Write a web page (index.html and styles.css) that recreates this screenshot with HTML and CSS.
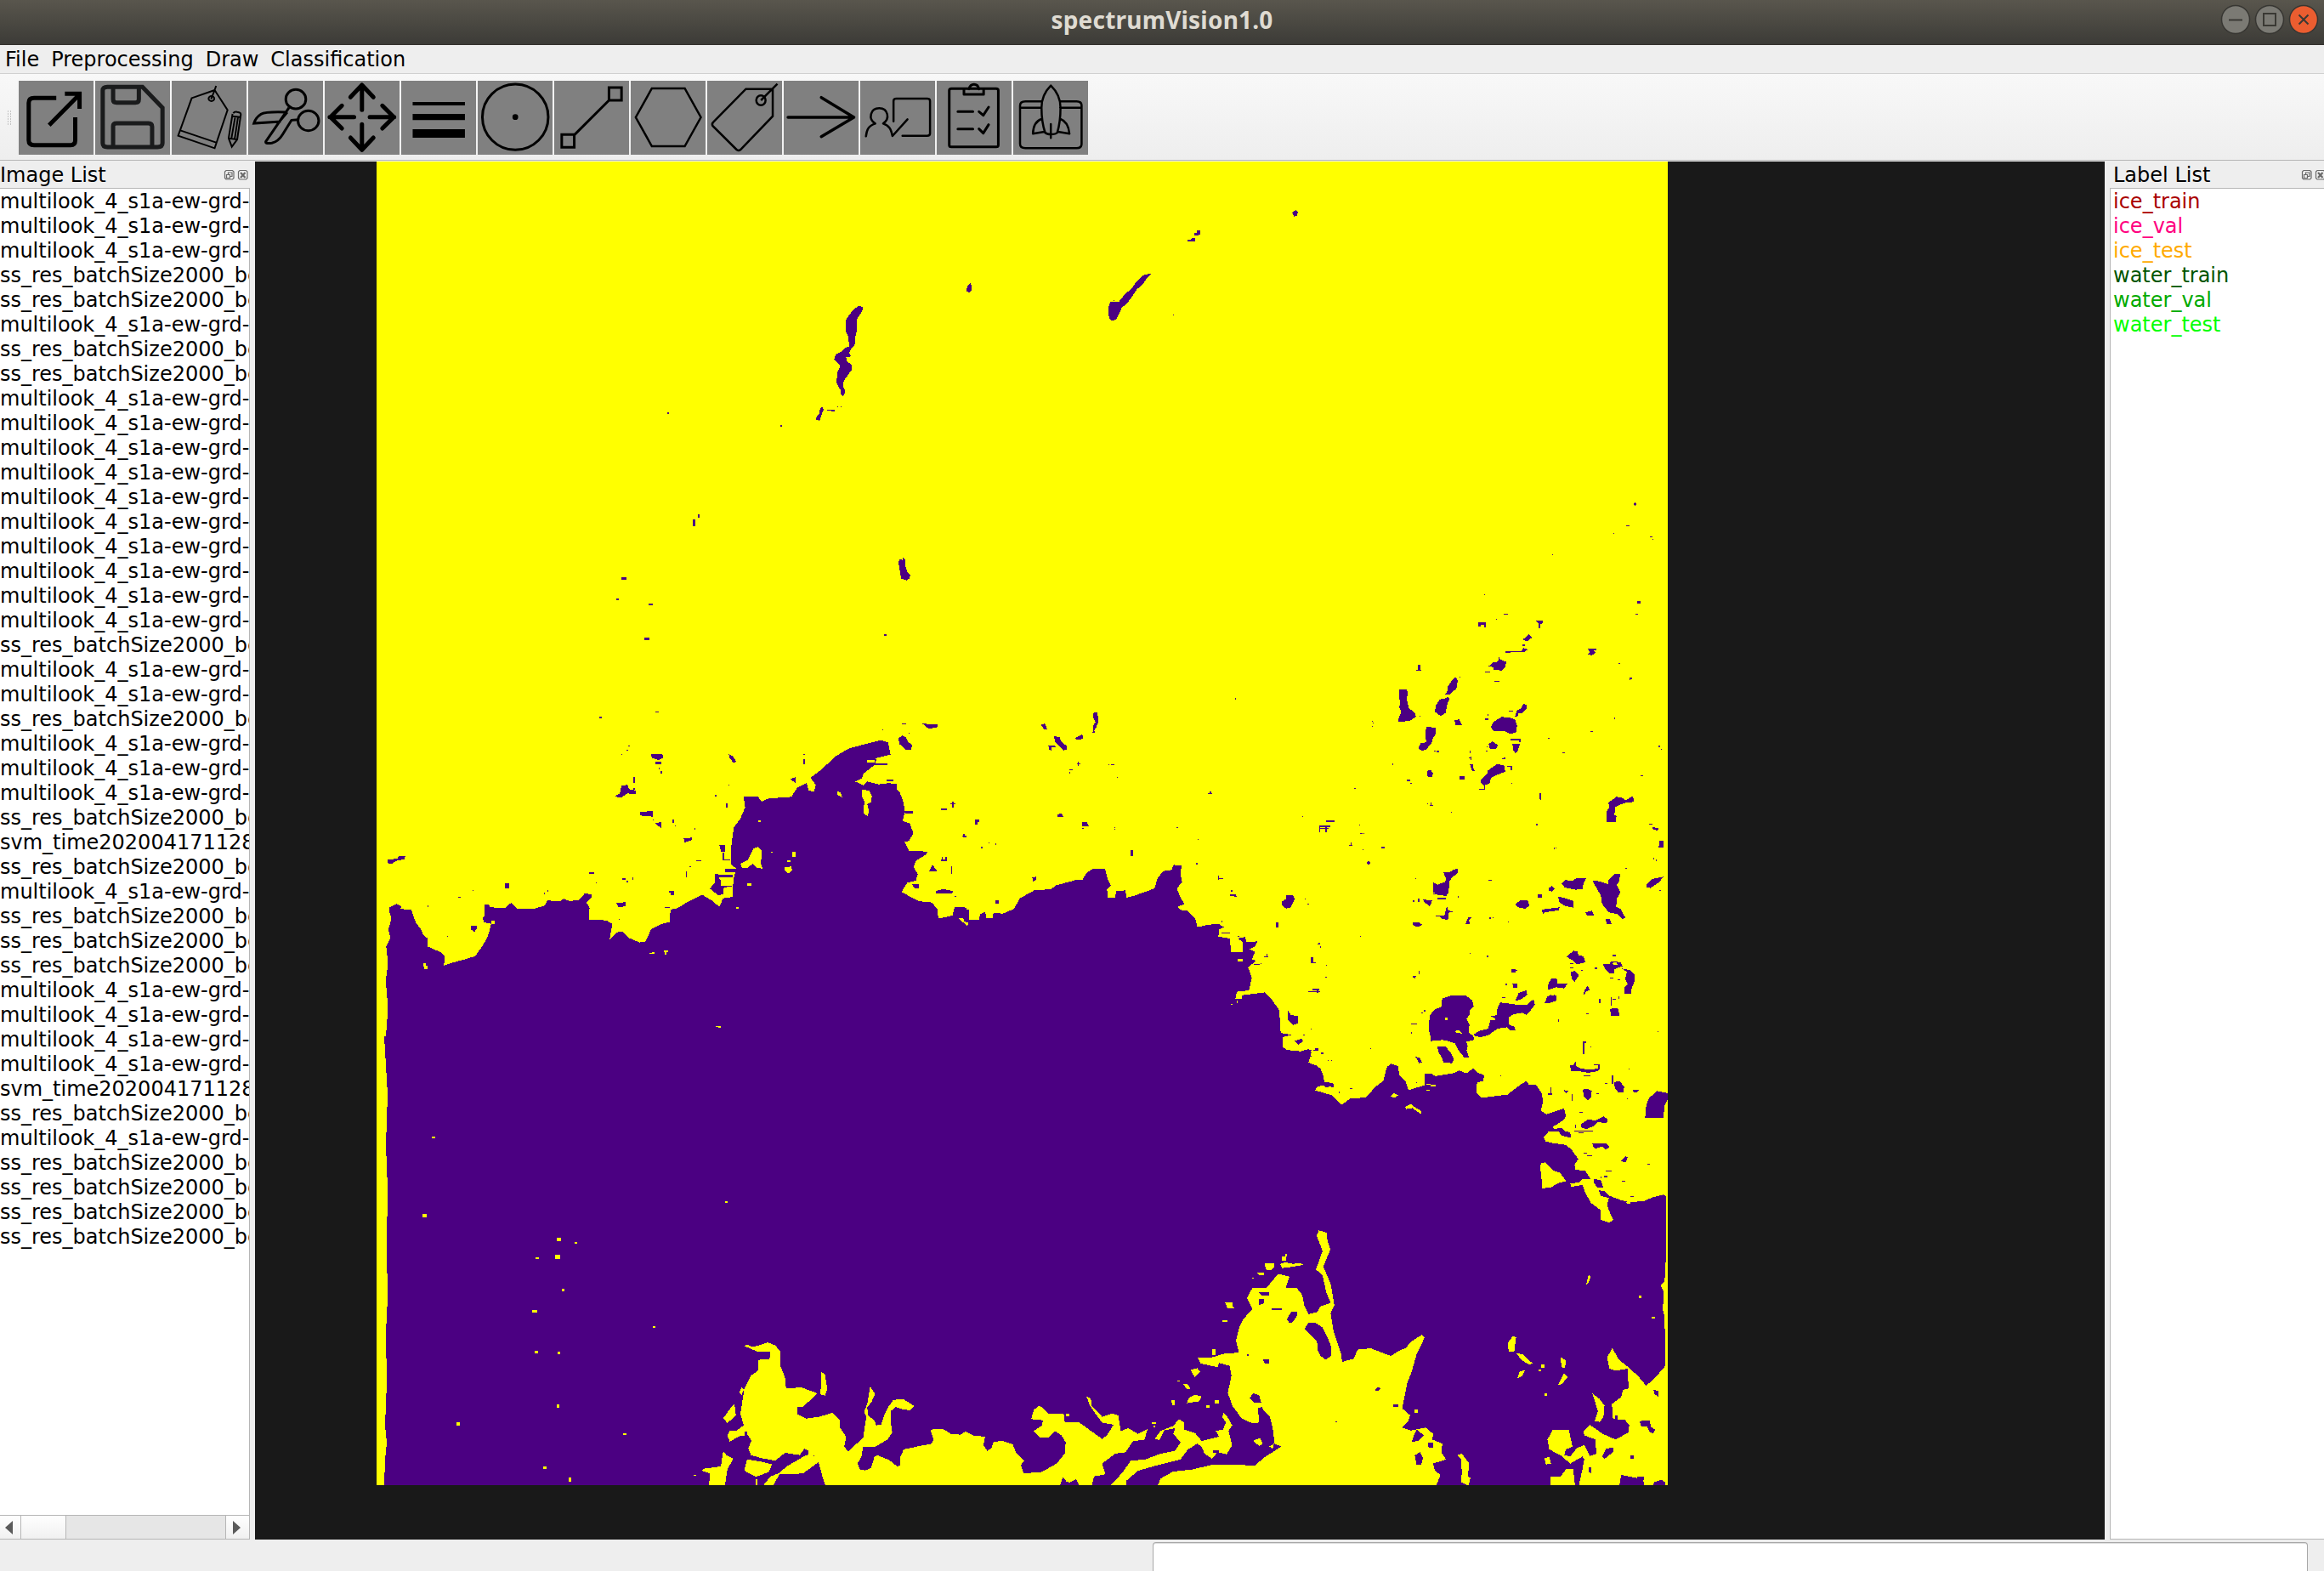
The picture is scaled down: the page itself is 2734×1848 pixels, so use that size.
FILE: index.html
```html
<!DOCTYPE html>
<html lang="en">
<head>
<meta charset="utf-8">
<title>spectrumVision1.0</title>
<link rel="stylesheet" href="styles.css">
</head>
<body>
<header class="titlebar">
  <h1 class="title">spectrumVision1.0</h1>
  <div class="winbtns">
    <svg class="winbtn" viewBox="0 0 36 36"><circle class="ring" cx="18" cy="18" r="16.5"/><path d="M10 18.5h16"/></svg>
    <svg class="winbtn" viewBox="0 0 36 36"><circle class="ring" cx="18" cy="18" r="16.5"/><path d="M11 11h14v14h-14z"/></svg>
    <svg class="winbtn close" viewBox="0 0 36 36"><circle class="ring" cx="18" cy="18" r="16.5"/><path d="M12.5 12.5l11 11M23.500 12.5l-11 11"/></svg>
  </div>
</header>
<nav class="menubar"><span>File</span><span>Preprocessing</span><span>Draw</span><span>Classification</span></nav>
<div class="toolbar">
  <i class="grip"></i>
  <svg class="tool w5" viewBox="52 285 209 261" preserveAspectRatio="none"><path d="M157 346H95Q80 346 80 363V495Q80 512 95 512H197Q210 512 210 495V414M181 331H222V384M137 442L222 333"/></svg>
  <svg class="tool w5 soft" viewBox="266 285 209 261" preserveAspectRatio="none"><path d="M300 307H398L454 380V505Q454 519 440 519H300Q287 519 287 505V320Q287 307 300 307M316 307V350Q316 362 326 362H378Q388 362 388 350V307M316 519V445Q316 435 326 435H415Q425 435 425 447V519"/></svg>
  <svg class="tool w2" viewBox="480 285 209 261" preserveAspectRatio="none"><path d="M536 346L600 318L636 388L600 523L498 479ZM504 460L604 503M604 303L600 318L590 350M652 400Q655 393 663 395Q674 397 673 405L663 492L648 518L639 488L650 402M650 410L672 413M640 488L662 492M657 415L647 488M665 415L656 490"/><ellipse cx="591" cy="348" rx="8" ry="9"/></svg>
  <svg class="tool w3" viewBox="694 285 209 261" preserveAspectRatio="none"><ellipse cx="827" cy="350" rx="28" ry="34"/><ellipse cx="862" cy="426" rx="29" ry="35"/><path d="M808 380L743 500Q742 508 760 505Q778 500 790 475L815 424L836 422M803 396Q742 393 730 403Q715 415 710 435L785 429M803 396L782 428"/></svg>
  <svg class="tool w5 round" viewBox="908 285 209 261" preserveAspectRatio="none"><path d="M1012 388V302M980 343L1012 300L1044 343M1012 439V525M980 486L1012 529L1044 486M990 413H922M956 373L924 413L956 453M1034 413H1102M1069 373L1101 413L1069 453"/></svg>
  <svg class="tool" viewBox="1121 285 209 261" preserveAspectRatio="none"><path class="solid" d="M1153 360h146v12h-146zM1153 402h146v22h-146zM1153 456h146v30h-146z"/></svg>
  <svg class="tool w3" viewBox="1335 285 209 261" preserveAspectRatio="none"><ellipse cx="1440" cy="413" rx="92" ry="116"/><ellipse class="solid" cx="1440" cy="413" rx="8" ry="10"/></svg>
  <svg class="tool w3" viewBox="29 45 209 261" preserveAspectRatio="none"><path d="M182 69h35v45h-35zM50 235h35v45h-35zM182 114L86 235"/></svg>
  <svg class="tool w2b" viewBox="242 45 209 261" preserveAspectRatio="none"><path d="M301 72H393L438 174L393 276H301L256 174Z"/></svg>
  <svg class="tool w2b" viewBox="456 45 209 261" preserveAspectRatio="none"><path d="M564 74H639V170L549 288Q544 294 538 288L471 204Q468 197 473 191ZM606 114L652 56"/><ellipse cx="606" cy="114" rx="13" ry="17"/></svg>
  <svg class="tool w35 round" viewBox="670 45 209 261" preserveAspectRatio="none"><path d="M682 174H866M775 104L866 174L775 242"/></svg>
  <svg class="tool w2b round" viewBox="884 45 209 261" preserveAspectRatio="none"><path d="M926 196C905 180 912 142 937 142C962 142 968 180 948 196C965 203 970 215 974 240L1016 181M926 196C905 205 902 220 900 241M977 188V116Q977 108 985 108H1071Q1079 108 1079 116V231Q1079 239 1071 239H1002"/></svg>
  <svg class="tool w3 round" viewBox="1098 45 209 261" preserveAspectRatio="none"><rect x="1133" y="73" width="137" height="205" rx="6"/><path d="M1174 75V93H1229V75M1188 74Q1192 58 1202 58Q1213 58 1216 74M1157 154H1199M1216 154L1228 167L1243 138M1157 215H1199M1216 215L1228 230L1243 200"/></svg>
  <svg class="tool w2b round" viewBox="1311 45 209 261" preserveAspectRatio="none"><path d="M1389 118H1345Q1330 118 1330 133V268Q1330 283 1345 283H1488Q1502 283 1502 268V133Q1502 118 1488 118H1443M1330 140H1390M1442 140H1502M1416 62Q1390 95 1390 140Q1390 190 1400 228Q1405 234 1416 234Q1430 234 1434 228Q1443 190 1443 140Q1443 95 1416 62ZM1390 180Q1367 190 1366 232L1398 225M1443 180Q1465 190 1468 232L1436 225M1416 198V247"/></svg>
</div>
<main class="workspace">
  <section class="dock images">
    <div class="dockhead"><span>Image List</span><svg class="dockbtns" viewBox="0 0 27 12"><path d="M2 .5h7.500l1.500 1.500v7.500l-1.500 1.500h-7.500l-1.500-1.500v-7.500zM18 .5h7.500l1.500 1.500v7.500l-1.500 1.500h-7.500l-1.500-1.500v-7.500zM2.500 5.500h4v4h-4zM4.500 5.500v-2.500h4.500v4.500h-2.500"/><path class="x" d="M19 3l5.500 6M24.500 3l-5.500 6"/></svg></div>
    <ul class="list">
      <li>multilook_4_s1a-ew-grd-</li><li>multilook_4_s1a-ew-grd-</li><li>multilook_4_s1a-ew-grd-</li><li>ss_res_batchSize2000_be</li><li>ss_res_batchSize2000_be</li><li>multilook_4_s1a-ew-grd-</li><li>ss_res_batchSize2000_be</li><li>ss_res_batchSize2000_be</li><li>multilook_4_s1a-ew-grd-</li><li>multilook_4_s1a-ew-grd-</li><li>multilook_4_s1a-ew-grd-</li><li>multilook_4_s1a-ew-grd-</li><li>multilook_4_s1a-ew-grd-</li><li>multilook_4_s1a-ew-grd-</li><li>multilook_4_s1a-ew-grd-</li><li>multilook_4_s1a-ew-grd-</li><li>multilook_4_s1a-ew-grd-</li><li>multilook_4_s1a-ew-grd-</li><li>ss_res_batchSize2000_be</li><li>multilook_4_s1a-ew-grd-</li><li>multilook_4_s1a-ew-grd-</li><li>ss_res_batchSize2000_be</li><li>multilook_4_s1a-ew-grd-</li><li>multilook_4_s1a-ew-grd-</li><li>multilook_4_s1a-ew-grd-</li><li>ss_res_batchSize2000_be</li><li>svm_time202004171128</li><li>ss_res_batchSize2000_be</li><li>multilook_4_s1a-ew-grd-</li><li>ss_res_batchSize2000_be</li><li>ss_res_batchSize2000_be</li><li>ss_res_batchSize2000_be</li><li>multilook_4_s1a-ew-grd-</li><li>multilook_4_s1a-ew-grd-</li><li>multilook_4_s1a-ew-grd-</li><li>multilook_4_s1a-ew-grd-</li><li>svm_time202004171128</li><li>ss_res_batchSize2000_be</li><li>multilook_4_s1a-ew-grd-</li><li>ss_res_batchSize2000_be</li><li>ss_res_batchSize2000_be</li><li>ss_res_batchSize2000_be</li><li>ss_res_batchSize2000_be</li>
    </ul>
    <div class="scroll">
      <div class="arrow"><svg viewBox="0 0 9 16"><path d="M9 0v16l-9-8z"/></svg></div>
      <div class="handle"></div><div class="track"></div>
      <div class="arrow right"><svg viewBox="0 0 9 16"><path d="M0 0v16l9-8z"/></svg></div>
    </div>
  </section>
  <section class="canvas">
    <svg class="map" viewBox="443 190 1519 1557" shape-rendering="crispEdges">
      <!-- solid interior of the ice field -->
      <path class="p" d="M452 1219H1100V1299H1600V1499H1959V1747H452l1-30 2-20-2-20 2-50-1-60 2-40-1-60 1-70-2-50 2-60z"/>
      <!-- west coast -->
      <g transform="translate(440 820) scale(.446429 .333333)">
        <path class="p" d="M31 1203L37 1100 31 1000 37 940 32 880 43 850 38 820 46 780 40 755 40 742 60 730 72 738 70 748 98 750 110 795 124 820 130 840 140 850 141 880 175 900 187 915 184 947 205 938 240 925 266 915 285 880 300 845 309 800 290 795 286 780 292 770 292 732 303 732 306 742 345 744 362 725 378 748 418 748 450 736 457 718 490 720 500 712 515 720 540 716 556 692 575 698 572 710 560 725 568 745 566 785 612 788 628 800 621 855 640 830 655 827 672 850 700 866 716 862 730 820 755 802 780 793 781 750 800 745 830 720 865 698 890 718 910 740 920 710 946 705 945 680 948 640 955 605 940 590 942 520 948 460 965 430 978 390 974 350 1010 350 1022 368 1040 358 1100 352 1115 320 1140 303 1145 330 1160 334 1164 310 1150 285 1180 255 1215 210 1250 182 1305 162 1335 152 1355 160 1361 203 1325 215 1320 238 1290 270 1285 288 1268 298 1290 312 1300 298 1330 308 1360 303 1385 335 1395 370 1399 405 1393 438 1412 445 1421 480 1410 508 1398 510 1410 543 1458 545 1455 555 1428 578 1422 600 1433 625 1428 648 1405 655 1390 688 1435 720 1470 725 1485 750 1487 782 1525 775 1530 742 1550 742 1568 752 1568 1203Z
        M1382 145L1392 136 1402 142 1408 160 1418 168 1416 185 1402 186 1384 165ZM1445 94L1485 96 1485 106 1462 112ZM730 202L760 202 762 215 750 222 732 214ZM742 228h14v10h-14zM935 202L945 208 955 228 948 233 937 215ZM635 350L648 340 652 312 668 310 672 325 690 330 690 343 668 340 650 356ZM702 405L735 402 735 422 702 418ZM742 445L758 440 758 466ZM816 498L838 496 838 504 818 514ZM910 522L926 522 924 545 914 545ZM36 574L62 570 66 560 82 562 80 572 58 578 48 588 36 586ZM256 808L270 806 270 818 264 830 256 820ZM346 658h10v16h-10zM638 726L662 724 662 738 645 742ZM885 676L898 655 898 625 946 628 946 635 908 636 920 660 945 668 922 672 920 695 908 700ZM1462 615L1472 592 1484 614ZM1480 684L1500 678 1525 684 1524 693 1482 694ZM1418 660h18v14h-12zM1096 290L1112 282 1110 302ZM777 684h14v14h-10v-8h-4zM1320 235h32v6h-32zM1350 292h18v6h-18zM1362 305h15v22h-10zM1396 402h24v8h-20zM926 607h30v10h-30z"/>
        <path class="sp" d="M742 52h8M598 70h2M1390 95h12M686 282v20M686 320v8M757 262v8M752 250v5M1133 202v3M1133 218v18M935 308v5M900 346v4M930 376v14M789 432v12M794 453v3M736 432v3M845 465h2M868 490h2M850 578h12M833 596v4M823 615v20M567 621h14M585 655h2M655 642h8M668 648v5M682 636v10M449 693h2M458 680v6M222 706h6M260 682h2M142 736v5M193 844h2M921 548v28M921 574h18M1518 376h14M1525 368v22M1495 396h15M1550 491h10M1555 482v12M1497 565v12h10v-12M1522 598v26M1530 703h4M765 742h14M653 184h2M665 188h4M672 172v3M653 201v3M1340 115h2M1408 127h4M644 784h3"/>
        <path class="y" d="M965 588L985 575 1000 535 1012 528 1021 540 1020 590 1024 606 1008 602 998 588 985 602 970 602ZM1082 600L1100 598 1102 612 1092 622 1082 612ZM1088 575h10v8h-10zM1102 545h8v18h-8zM1220 330L1230 338 1234 355 1222 345ZM1286 326L1305 330 1312 350 1310 370 1300 378 1305 405 1300 420 1290 410 1290 385 1294 375 1286 350ZM1322 215h22v4h-22zM1300 222h20v10h-20zM984 658h10v8h-10zM1012 436h8v5h-8zM130 940h6v8h5v12h-9zM726 903L740 900 740 905 728 907ZM764 895h10v5h-3v10h-4zM954 740h6v6h-6zM1046 545h5v4h-5zM900 1161h7v3h-7zM576 766h4v10h-4zM310 790h8v12h-8zM915 636h26v30h-26zM1540 782h26v24h-10z"/>
      </g>
      <!-- north coast -->
      <g transform="translate(1100 800) scale(.333333)">
        <path class="p" d="M0 810L10 810 10 842 45 835 63 830 66 808 85 800 110 803 120 825 118 845 155 845 160 825 178 818 180 840 203 840 206 822 240 824 278 808 300 770 350 742 410 738 425 725 495 706 520 705 535 680 555 667 600 665 610 705 621 725 607 740 610 768 635 768 640 745 672 742 676 768 700 762 740 748 775 735 785 700 805 674 835 670 842 652 870 655 866 685 872 714 853 735 865 765 880 790 856 800 865 811 890 814 920 845 926 872 960 864 1000 860 1020 872 1003 880 1000 905 1040 912 1045 960 1085 960 1087 925 1068 912 1095 906 1098 925 1138 922 1130 940 1110 950 1130 960 1118 985 1132 990 1105 1015 1118 1050 1108 1095 1065 1100 1060 1125 1082 1125 1085 1112 1165 1102 1190 1130 1215 1165 1220 1245 1258 1252 1228 1260 1228 1295 1240 1305 1290 1310 1320 1302 1328 1315 1318 1350 1350 1362 1370 1400 1373 1418 1408 1425 1405 1438 1385 1430 1345 1434 1342 1448 1400 1465 1420 1485 1430 1500 1445 1500 1470 1478 1500 1478 1500 1503 0 1503Z
        M374 156L388 154 396 174 384 174ZM420 198L440 202 446 218 464 232 464 246 452 248 424 218ZM400 232L420 230 428 236 412 238 410 248 402 244ZM496 204L520 192 522 208 498 210ZM560 114L573 114 577 146 570 164 562 178 566 186 556 186 560 156 566 148 558 132ZM430 473L446 472 456 484 434 484ZM519 502L536 502 540 512 544 516 519 516ZM343 696L356 694 358 704 346 710ZM1224 782L1240 772 1238 758 1262 758 1270 772 1256 802 1240 806 1226 798ZM1245 1165L1256 1182 1280 1186 1280 1212 1264 1217 1246 1198ZM1268 1274L1296 1264 1298 1276 1282 1287ZM212 778h12v12h-12zM1204 854h8v18h-8zM690 600h8v20h-8zM142 493h13v8h-6v10h-7zM1327 978h8v22h-8z"/>
        <path class="sp" d="M1058 66h3M500 296h12M506 288v14M474 316h12M476 324v6M622 298h10M612 298h2M642 343h3M964 400h14M972 392v10M1480 383h5M1380 498h30M1356 516h40M1356 524h32M1380 518v18M1358 518v18M1462 584h12M1468 572v14M55 436h18M64 428v20M22 456h20M98 552h12M104 542v14M163 591h6M190 574h2M214 575v8M20 636h20M26 626v10M38 626v10M58 658v24M70 763h2M520 523h5M634 519v3M634 525v3M852 520h5M928 562v3M1297 481h2M922 648h4M1000 690v14M1000 700h16M1043 744h8M1042 759h20M1056 764h8M1306 772h2M1315 790h5M1012 850v5M1012 893h30M1068 904h5M1160 976h16M1172 966v10M1125 1003h20M1352 930h6M1360 942h2M1330 998h14M1380 1006h3M1378 1048h5M1318 1100h42M1332 1092h24M1350 1090v14M1327 1230v3M1300 1252h6M1340 1302h14M1364 1316h6M1386 1342h3M1398 1342h3M1424 1455h4M1466 1441h6M1150 1000h2"/>
        <path class="y" d="M82 840L100 840 104 852 118 856 114 870 98 854ZM1050 932h30v25h-30zM1068 984h18v10h-18zM1045 1142h4v3h-4zM1066 1130h3v10h-3z"/>
      </g>
      <!-- north-east islands -->
      <g transform="translate(1540 560) scale(.333333)">
        <path class="p" d="M597 517h28v18h-6v-10h-14v6h-8zM798 510h26v10l-8 4v14h-5v-16zM752 576L764 570 776 558 788 570 768 584ZM694 618h56l6-12 16 6-10 8h-50v5h-18zM632 672L650 658 664 656 672 645 696 656 692 676 680 686 652 684 650 674ZM984 610h30v6h-8l6 8-14 8-16-2 10-8zM378 684h6v-18h8v12l4 10h-16zM318 754L346 752 348 774 344 785 352 818 375 838 377 850 355 864 314 868 318 850 326 834 316 812 322 808 318 775ZM516 708L525 722 520 750 495 772 480 772 490 755 490 742 505 720ZM490 778L496 786 486 810 483 835 465 847 444 832 448 808 462 788 478 786ZM514 862L530 858 540 880 516 880ZM414 885L447 888 447 910 436 928 432 945 422 954 414 965 398 970 386 960 394 942 414 940 410 912ZM734 828L750 818 756 804 768 808 768 820 752 836 738 838 736 850 726 850ZM642 884L650 868 680 850 706 852 726 858 734 880 732 904 710 910 690 900 660 900 648 898ZM634 946L646 936 668 950 660 962 638 962ZM710 928h36v12h-6v-8h-28zM718 946L744 946 736 972 728 978 720 966ZM606 1074L628 1052 630 1040 664 1016 690 1022 692 1044 658 1056 642 1066 638 1084 618 1092 608 1084ZM568 1018h12v14l6 10h-10zM416 1040L430 1038 438 1050 434 1062 416 1060ZM532 1058h18v14h-18zM1050 1222L1050 1185 1060 1168 1056 1152 1085 1132 1105 1136 1118 1144 1140 1130 1148 1140 1144 1150 1112 1154 1080 1168 1078 1196 1085 1200 1082 1222ZM1212 1238L1235 1244 1230 1252 1214 1246ZM1236 1288h16v22h-18zM1158 441h12v9h-12zM812 1120h8v20h-8z"/>
        <path class="sp" d="M1146 99h8M1150 94v10M1120 175h10M1075 202h3M1203 214h8M1213 223h3M858 277h3M618 418h3M687 488h14M660 505h3M1152 487h8M754 597h8M670 640v8M620 692h18M655 724h18M1092 661h5M1132 714h8M1133 714v5M532 709h3M223 865v3M226 871v3M223 882v3M391 847h3M706 829h14M620 858h14M631 841v5M1078 853v5M994 902h8M844 925h5M895 976h8M1234 954h6M1243 962v4M626 955h3M625 970h4M442 970h6M450 972h8M568 970v8M564 995h8M571 990v12M680 998h12M690 992v8M700 1024h16M714 1026v12M294 1017h3M346 1074h12M358 1084h4M160 1102h5M620 1092v12M600 1105h20M715 1084h3M1170 1057h8M818 1125v18M418 1157h3M425 1163h12M431 1152v12M502 1186h3M802 1230h6M1200 1228h12M256 1311h12M178 1232h3M180 1262h8M193 1262h3M190 1318h3M865 1314h3M870 1312h3M1216 1350v3M1225 1356h3"/>
      </g>
      <!-- east coast -->
      <g transform="translate(1540 1000) scale(.333333)">
        <path class="p" d="M0 755L15 755 40 770 52 800 53 818 85 822 85 832 60 838 50 830 30 833 22 848 70 862 100 885 115 899 145 877 200 873 235 835 262 815 275 765 290 754 315 762 318 795 340 815 351 847 380 838 408 830 408 790 430 788 445 798 510 787 530 778 555 788 580 770 595 785 618 795 615 815 593 820 590 855 610 874 700 863 750 825 768 815 775 828 800 828 820 855 826 885 818 920 838 932 900 912 907 940 895 955 858 978 865 985 890 980 905 992 922 996 924 1015 892 1008 880 992 845 994 828 1012 835 1028 860 1034 905 1040 925 1055 950 1090 937 1110 940 1128 975 1132 990 1155 994 1162 965 1160 955 1172 922 1177 925 1188 965 1182 975 1210 995 1245 1028 1270 1030 1305 1060 1315 1074 1305 1060 1275 1052 1255 1058 1228 1030 1220 1022 1200 1045 1205 1060 1220 1100 1235 1130 1243 1185 1238 1210 1226 1250 1216 1262 1222 1260 1440 1257 1503 0 1503Z
        M474 78L496 78 512 68 526 66 526 80 506 95 496 110 492 150 484 162 455 158 438 148 438 114 454 122 480 112 484 102ZM452 168h30v6h-30zM400 174L435 178 426 198 412 188ZM486 198L492 212 508 218 494 220 490 248 464 240 462 232 478 230ZM366 256L385 254 400 264 384 272 366 264ZM562 236h12l-10 12 4 14h-16l6-16zM892 118L905 106 930 108 945 98 978 100 968 120 966 138 940 140 902 132ZM1000 108L1026 110 1055 120 1056 108 1080 84 1097 84 1096 108 1086 124 1099 148 1086 172 1084 200 1100 208 1116 238 1108 244 1088 226 1058 220 1034 190 1030 160 1018 140ZM1190 124L1212 102 1252 94 1232 116 1205 134 1192 132ZM845 135L856 127 868 136 856 146 846 143ZM808 156h14v12h-14zM726 192L745 178 772 178 778 196 762 207 738 202ZM878 164L900 168 934 180 934 203 905 198 884 184ZM820 210L850 206 884 202 882 212 832 220 826 226ZM976 220L998 214 1006 230 980 230ZM1046 244L1060 242 1068 260 1052 262ZM908 376L934 355 948 358 950 370 968 375 976 395 960 400 945 402 932 390ZM925 430L938 426 952 442 938 464 926 455ZM1036 402L1060 402 1068 392 1100 396 1106 410 1078 420 1076 434 1058 434 1046 420ZM1104 418L1135 424 1148 440 1148 465 1138 490 1138 506 1112 506 1114 484 1124 472 1116 455 1122 430ZM842 494L845 470 856 452 874 454 878 472 896 472 912 472 900 488 872 484ZM832 540L840 518 858 508 874 514 872 532 848 540ZM728 532L740 504 768 494 770 510 750 526ZM968 514L972 494 984 478 990 494 978 500ZM1062 560L1090 558 1096 584 1066 586ZM714 420h14v12h-14zM718 470h16v15h-14zM364 446L378 444 374 454ZM467 552L470 524 500 514 552 512 576 530 581 550 568 565 566 580 556 596 566 615 564 645 580 655 582 670 555 676 560 690 556 708 565 732 548 732 526 705 515 682 495 675 470 670 430 674 428 655 422 630 426 585 440 565ZM582 650L600 638 632 630 640 600 662 598 642 586 664 582 664 562 674 538 696 540 735 546 770 545 792 526 797 545 780 568 768 582 752 574 720 580 705 590 705 615 726 624 728 636 710 636 700 625 665 630 632 654 605 660 585 656ZM452 692L480 692 498 712 512 738 505 752 475 750 468 732 458 715ZM376 730L390 732 400 750 388 752ZM965 676h12v6h-6v38h-6zM920 758h14l6-12 4 18 20 8 35 2 22-4v-10h-15v-4h20v16l-6 8-34 6-36-6h-25zM1076 820L1096 814 1112 835 1110 855 1092 856 1080 840ZM966 845L980 842 998 850 994 875 984 882 970 870ZM898 846L914 850 908 860ZM1142 846h22l-8 10h-10zM1186 945L1190 900 1200 875 1228 850 1266 858 1266 880 1255 900 1250 946ZM958 968L985 950 1010 955 1040 940 1054 950 1050 964 1020 960 1002 975 980 984 962 980ZM1000 1036h50l10 12-14 10-12-12-24 8-8-8zM1100 1098L1116 1080 1124 1084 1118 1102ZM1005 1160L1030 1166 1038 1190 1018 1192 1004 1172Z"/>
        <path class="sp" d="M205 45h10M210 40v10M376 101h3M632 107h12M366 180h6M387 170v14M448 233h14M636 240h6M648 239h3M702 253h3M180 304h3M30 332h10M40 340v5M568 365h3M627 375h5M524 165h3M438 154h12M1116 65h5M1237 142h5M1216 28v4M1225 36h3M1070 372h12M1008 417h10M960 424h6M920 400h14M922 415h12M388 425v14M728 424h8M692 474h8M680 521h12M395 575h8M405 567h7M360 613h22M361 643v4M1062 452h12M1090 457h8M1026 525v16M1067 518v30M1072 526h12M1093 516v8M978 578h8M880 596v10M1230 640h3M994 694h3M1128 773h3M676 796h3M216 700h3M378 820h3M970 797h24M1044 823h10M1071 796v30M1014 860h8M1122 877h3M854 838v22M844 861h14M928 862v22M953 925h12M940 970v10M935 992h66M950 998h20M1195 1108h8M970 1070h12M982 1078h18M1048 1133h20M1040 1152h14M1028 1155h4M1105 1168h10M1133 1222h12M0 706h8M16 706h16M42 717h8M0 728h8M65 742h3M78 742h3M145 842h8M104 855h4"/>
        <path class="y" d="M818 1105L835 1102 860 1130 885 1138 908 1168 880 1175 850 1192 822 1193 820 1150 816 1125ZM288 870L300 858 315 866 300 874ZM340 906L360 896 370 905 395 920 396 932 380 922 365 910 342 914ZM414 824h14v4h-14zM430 828h18v5h-18zM414 846h12v4h-12zM1070 398L1085 396 1088 404 1074 404ZM480 590h9v9h-9zM515 638L530 636 540 648 520 644ZM1120 1243h14v6h-10zM856 494h8v20h-8z"/>
      </g>
      <!-- south-west leads -->
      <g transform="translate(780 1400) scale(.382653 .333333)">
        <path class="y" d="M142 1043L143 1000 120 990 125 983 178 975 185 920 195 935 216 948 198 985 190 1043ZM308 1043L330 1010 355 1000 380 975 440 935 468 938 478 960 430 1000 358 1003 338 1043Z
        M245 548L262 547 275 553 300 546 322 537 345 548 361 570 361 620 376 665 378 700 425 696 475 717 430 765 412 765 412 790 440 806 480 800 520 786 543 810 545 840 563 870 557 905 570 923 590 900 615 875 625 800 618 780 628 755 637 693 652 720 640 750 628 765 630 795 650 812 655 830 670 828 680 795 690 770 708 740 740 738 772 762 760 776 740 775 715 765 700 780 702 840 705 855 690 880 650 907 615 907 610 940 598 965 605 985 622 989 640 980 650 940 660 936 695 952 720 975 730 970 728 945 740 915 780 905 825 895 832 882 822 845 860 842 885 860 915 863 930 852 955 866 990 870 985 900 997 920 1010 910 1015 890 1040 884 1075 897 1085 925 1110 955 1100 970 1108 998 1160 997 1210 965 1235 930 1238 890 1225 865 1205 850 1185 872 1160 874 1140 850 1165 830 1168 812 1132 808 1140 775 1158 760 1185 788 1232 790 1235 818 1280 820 1350 878 1365 865 1385 828 1350 820 1330 790 1310 755 1302 728 1315 735 1318 760 1350 800 1380 788 1400 795 1407 850 1430 840 1460 860 1490 842 1480 882 1445 885 1422 925 1390 930 1350 965 1360 1003 1325 1010 1318 1043 1280 1043 1270 1020 1250 1032 1240 1028 1230 1012 1220 1043 499 1043 490 1010 478 960 468 938 445 935 448 920 435 912 420 935 375 927 345 955 300 945 270 935 262 910 272 885 262 865 235 868 205 888 198 865 205 848 225 850 248 830 238 790 250 700 270 655 292 637 292 600 328 590 328 570 290 570 270 560Z
        M485 640L498 650 505 700 498 725 482 720 487 690ZM185 805L210 765 220 755 224 795 198 822ZM258 950L310 960 335 968 325 995 285 1012 250 990ZM234 715L242 694 248 705 242 722ZM191 39h8v6h-8zM94 1004h8v4h-8zM1240 790h10v8h-10zM1503 820h14v4h-14zM1507 830h6v8h-6zM286 1020h4v20h-4z"/>
        <path class="p" d="M136 1000h8v25h-8zM252 852h8v16h-8zM242 918h12v16h-8zM256 930h10v18h-10zM308 590h18v8h-18z"/>
      </g>
      <!-- south-east leads -->
      <g transform="translate(1300 1400) scale(.433673 .333333)">
        <path class="y" d="M14 1043L45 1000 70 955 110 950 150 930 190 920 205 890 185 860 190 840 160 848 148 882 135 878 150 850 185 832 200 808 215 820 215 845 245 858 262 885 310 870 300 850 320 845 328 820 318 800 322 785 332 800 345 830 335 850 345 900 330 932 305 925 290 948 270 930 262 905 250 895 225 915 205 950 130 975 90 990 58 1025 58 1043Z
        M143 1043L150 1018 185 993 240 985 290 969 408 971 430 945 478 905 460 895 455 840 447 800 432 780 425 765 415 770 418 820 400 823 370 805 345 760 333 715 343 655 338 620 310 610 305 625 260 612 252 592 290 590 320 578 363 573 355 530 365 480 375 455 400 420 385 380 400 345 438 345 470 295 500 305 490 345 520 345 535 370 540 405 552 438 575 430 585 410 612 398 600 360 590 300 572 280 590 215 574 160 580 142 602 150 603 175 611 210 592 270 612 330 622 405 612 435 620 500 640 575 643 606 675 595 685 563 720 558 775 585 800 565 815 558 830 535 860 510 867 520 845 580 832 640 820 680 806 770 828 795 822 815 806 838 830 848 870 838 890 860 888 880 915 895 912 925 925 950 890 965 895 990 910 1005 898 1043Z
        M1528 615L1520 620 1490 665 1468 690 1445 655 1420 625 1395 600 1376 558 1362 590 1368 630 1385 637 1418 630 1420 700 1405 705 1400 730 1375 755 1378 808 1410 810 1422 830 1420 855 1385 880 1350 860 1315 828 1298 850 1300 865 1330 880 1333 930 1315 938 1300 900 1280 910 1262 940 1246 935 1250 915 1268 905 1258 845 1215 845 1200 880 1205 915 1235 935 1262 965 1295 940 1300 950 1295 985 1285 1043 1395 1043 1400 1005 1460 1020 1462 1043 1485 1043 1490 1030 1510 1022 1528 1040ZM1208 1043L1208 1010 1235 1012 1250 985 1270 985 1275 1043ZM1322 718L1340 735 1355 760 1352 800 1342 818 1328 815 1337 780ZM955 935L968 930 988 965 984 1010 992 1015 985 1043 965 1030 968 1000 966 950ZM1107 514L1115 520 1110 570 1095 570 1092 540ZM1115 575L1135 580 1150 602 1162 612 1150 615 1130 600ZM1118 665L1125 640 1140 635 1132 655ZM1236 590L1250 600 1248 628 1238 625ZM1228 688L1245 647 1256 660 1238 685ZM1192 945L1205 942 1210 965 1196 968ZM1192 718h8v9h-8zM1183 616h8v10h-8zM1176 634h6v5h-6zM840 775h8v10h-8zM1305 335L1312 298 1318 305 1312 325ZM1482 447h9v5h-9zM1449 373h5v8h-5zM402 885L420 874 428 895 418 903ZM445 905L458 895 455 912ZM432 258h28v12l-10 12h-12zM475 260L490 255 510 260 530 257 538 264 500 272 480 275ZM480 235h12v15h-12zM412 290h20v10h-14zM325 396h20v10l5 10h-18zM318 460h14v4h-14zM232 635L250 628 258 640 243 660ZM212 684h12l8 18h-10zM222 752L228 732 245 722 262 728 255 745ZM180 740h10v20h-8zM298 740h10v14h-10zM275 758h8v10h-8zM290 560h10v22h-10zM195 672h8v4h-8zM489 225h4v10h-4zM400 309h4v4h-4z
        M1523 17H1528V625H1520L1518 450 1513 420 1516 360 1507 335 1518 320 1521 250Z"/>
        <path class="p" d="M505 430L520 430 520 445 510 465 500 470 493 455ZM541 490L552 467 570 467 590 485 600 510 613 550 613 585 598 598 585 585 578 570 575 535 560 515ZM392 735L402 716 418 725 424 750 405 750ZM832 888L840 858 845 845 865 865 850 885ZM840 935L855 925 863 945 857 970 845 968ZM428 598h18v14h-12zM733 706L740 694 747 700 740 710ZM876 890h14v20h-12zM418 385L432 385 430 400 418 405ZM415 360h30v12h-20zM452 417h28v5h-28zM384 578h6v6h-6zM782 756h14v8h-14zM625 816h4v4h-4zM1348 940L1360 912 1380 908 1378 925 1355 948ZM1450 815L1478 812 1480 835 1492 845 1488 858 1478 855 1470 835 1455 835ZM1488 705L1502 708 1500 728 1490 720ZM1424 936h10v12h-10zM1312 978L1320 980 1320 1000 1312 995ZM1383 795h8v15h-8zM294 918h14v8h-14zM1425 20h8v4h-8zM1443 1012h20v10h-20z"/>
      </g>
      <!-- streaks in the open water -->
      <g transform="translate(860 220) scale(.446429 .333333)">
        <path class="p" d="M338 418L348 424 345 440 332 466 331 510 327 530 326 556 317 570 312 585 316 598 303 600 306 615 318 628 318 645 306 668 297 684 296 705 301 722 296 738 289 732 288 715 278 692 280 655 288 632 272 608 276 590 290 582 300 568 312 562 308 525 303 510 303 468 312 450 325 430ZM1106 307L1098 318 1084 345 1070 360 1054 392 1044 410 1030 425 1022 450 1015 468 1003 473 996 460 994 425 1000 405 1022 405 1040 375 1055 360 1068 335 1085 312 1098 307ZM622 350L632 338 635 362 628 374 621 368ZM1478 90L1488 82 1494 88 1492 100 1484 104ZM1228 154h8v14l-4 2h-11v-7h7zM1214 180h8v12h-19v-5h9zM240 774L244 785 238 805 234 824 224 822 226 808 234 800 234 785ZM254 785h20v8h-8l-2-4h-10zM441 1325L444 1314 452 1316 454 1306 458 1314 460 1340 466 1362 472 1370 470 1382 462 1388 448 1382 446 1362Z"/>
        <path class="sp" d="M132 840v5M280 775h3M289 775h3M1165 451h3M1008 400h3"/>
      </g>
      <path class="dot" d="M731 679h6v3h-6zM725 704h3v2h-3zM763 710h5v2h-5zM758 750h6v3h-6zM815 611h3v8h-3zM821 605h2v4h-2zM785 485h2v2h-2zM1040 746h3v2h-3zM705 843h3v2h-3z"/>
      <path class="y" d="M497 1428h5v4h-5zM508 1337h4v2h-4zM630 1479h4v2h-4zM655 1456h5v4h-5zM653 1476h6v5h-6zM676 1461h3v2h-3zM626 1541h6v3h-6zM661 1516h3v3h-3zM629 1589h4v3h-4zM656 1590h3v3h-3zM537 1673h4v4h-4zM655 1652h3v4h-3zM639 1725h4v3h-4zM669 1738h3v5h-3zM733 1686h4v2h-4zM768 1560h3v2h-3zM845 1207h3v2h-3z"/>
    </svg>
  </section>
  <section class="dock labels">
    <div class="dockhead"><span>Label List</span><svg class="dockbtns" viewBox="0 0 27 12"><path d="M2 .5h7.500l1.500 1.500v7.500l-1.500 1.500h-7.500l-1.500-1.500v-7.500zM18 .5h7.500l1.500 1.500v7.500l-1.500 1.500h-7.500l-1.500-1.500v-7.500zM2.500 5.500h4v4h-4zM4.500 5.500v-2.500h4.500v4.500h-2.500"/><path class="x" d="M19 3l5.500 6M24.500 3l-5.500 6"/></svg></div>
    <ul class="list">
      <li class="c1">ice_train</li><li class="c2">ice_val</li><li class="c3">ice_test</li><li class="c4">water_train</li><li class="c5">water_val</li><li class="c6">water_test</li>
    </ul>
  </section>
</main>
<footer class="status"><div class="field"></div></footer>
</body>
</html>
```
FILE: styles.css
```css
* { box-sizing: border-box; }
body {
  margin: 0;
  width: 2734px;
  height: 1848px;
  overflow: hidden;
  display: flex;
  flex-direction: column;
  background: #eee;
  color: #000;
  font: 24px/29px "DejaVu Sans", sans-serif;
}
svg { display: block; }

.titlebar {
  flex: none;
  height: 53px;
  display: grid;
  grid-template-columns: 1fr auto 1fr;
  align-items: start;
  background: linear-gradient(#59564d, #3c3b37);
  border-bottom: 1px solid #33302d;
}
.title {
  grid-column: 2;
  margin: 0;
  padding-top: 7px;
  color: #dfdbd2;
  font-family: "Noto Sans", sans-serif;
  font-size: 28px;
  letter-spacing: .2px;
  font-weight: bold;
  line-height: 32px;
}
.winbtns {
  justify-self: end;
  display: flex;
  gap: 4px;
  padding: 5px 6px 0 0;
}
.winbtn { width: 36px; height: 36px; fill: none; stroke: #3a3934; stroke-width: 2; }
.winbtn .ring { fill: #7b7a74; stroke: #373632; stroke-width: 1.5; }
.winbtn.close .ring { fill: #eb5d30; }

.menubar {
  flex: none;
  height: 33px;
  display: flex;
  gap: 14px;
  padding: 3px 0 0 6px;
}

.toolbar {
  flex: none;
  height: 103px;
  margin-bottom: 1px;
  padding: 8px 0 0 9px;
  display: flex;
  gap: 2px;
  background: linear-gradient(#f8f8f8, #eee);
  border-top: 1px solid #d0d0d0;
  border-bottom: 1px solid #b6b6b6;
}
.grip {
  width: 4px;
  height: 17px;
  margin: 35px 7px 0 0;
  background: conic-gradient(transparent 75%, #c4c4c4 0) 0 0 / 3px 3px;
}
.tool { width: 88px; height: 87px; background: #808080; fill: none; stroke: #000; }
.tool * { vector-effect: non-scaling-stroke; }
.tool .solid { fill: #000; stroke: none; }
.w5 { stroke-width: 5px; }
.w35 { stroke-width: 3.5px; }
.w3 { stroke-width: 3px; }
.w2b { stroke-width: 2.5px; }
.w2 { stroke-width: 2px; }
.soft { stroke: #1a1b1c; }
.round { stroke-linecap: round; stroke-linejoin: round; }

.workspace { flex: none; height: 1621px; display: flex; }
.dock { display: flex; flex-direction: column; }
.images { width: 294px; margin-right: 6px; }
.labels { width: 252px; margin-left: 6px; }
.dockhead {
  flex: none;
  height: 31px;
  display: flex;
  justify-content: space-between;
  padding: 2px 3px 0 0;
}
.dockbtns {
  width: 27px;
  height: 12px;
  margin-top: 8px;
  overflow: visible;
  fill: none;
  stroke: #6a6a6a;
  stroke-width: 1.2;
}
.dockbtns .x { stroke-width: 2.2; }
.labels .dockhead { padding: 2px 0 0 4px; }
.labels .dockbtns { margin-right: -1px; }
.list {
  flex: 1;
  margin: 0;
  padding: 1px 0 0;
  list-style: none;
  overflow: hidden;
  white-space: nowrap;
  background: #fff;
  border: 1px solid #b6b6b6;
}
.images .list { border-left: 0; border-bottom: 0; }
.labels .list { border-right: 0; padding-left: 3px; }
.list li { height: 29px; }
.c1 { color: #aa0000; }
.c2 { color: #ff007f; }
.c3 { color: #ffaa00; }
.c4 { color: #005500; }
.c5 { color: #00aa00; }
.c6 { color: #00ff00; }

.scroll {
  flex: none;
  height: 29px;
  display: flex;
  border: 1px solid #b6b6b6;
  border-left: 0;
}
.arrow { width: 24px; padding: 6px 0 0 6px; background: linear-gradient(#fefefe, #f1f1f1); }
.arrow svg { width: 9px; height: 16px; fill: #5a5a5a; }
.arrow.right { width: 27px; padding-left: 8px; }
.handle { width: 54px; background: linear-gradient(#fefefe, #f1f1f1); border: solid #b6b6b6; border-width: 0 1px; }
.track { flex: 1; background: #e6e6e6; border-right: 1px solid #b6b6b6; }

.canvas { width: 2176px; padding-left: 143px; background: #191919; }
.map { width: 1519px; height: 1557px; background: #ff0; }
.p, .dot { fill: #4b0082; }
.y { fill: #ff0; }
.sp { fill: none; stroke: #4b0082; stroke-width: 3.4; }

.status { flex: 1; display: flex; padding: 3px 19px 0 0; justify-content: flex-end; }
.field {
  width: 1359px;
  background: #fff;
  border: 1px solid #a8a8a8;
  border-bottom: 0;
  border-radius: 4px 4px 0 0;
  box-shadow: inset 0 1px #ddd;
}
```
